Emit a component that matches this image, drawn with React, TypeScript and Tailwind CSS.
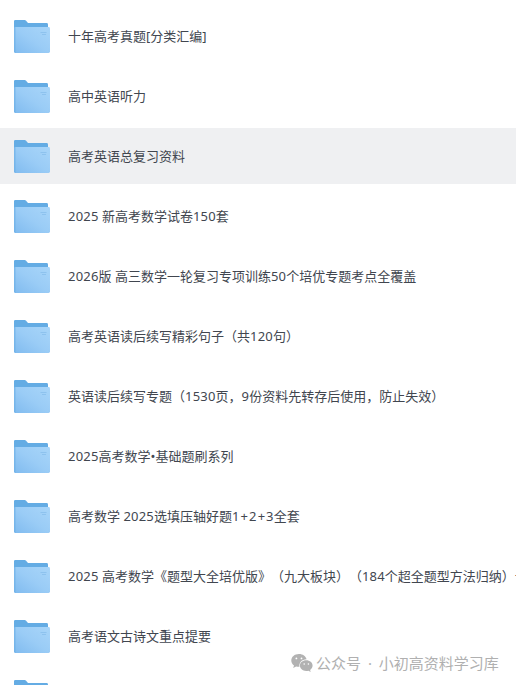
import React from 'react'

interface FolderItem {
  id: number
  name: string
  active?: boolean
}

const folders: FolderItem[] = [
  { id: 1, name: '十年高考真题[分类汇编]' },
  { id: 2, name: '高中英语听力' },
  { id: 3, name: '高考英语总复习资料', active: true },
  { id: 4, name: '2025 新高考数学试卷150套' },
  { id: 5, name: '2026版 高三数学一轮复习专项训练50个培优专题考点全覆盖' },
  { id: 6, name: '高考英语读后续写精彩句子（共120句）' },
  { id: 7, name: '英语读后续写专题（1530页，9份资料先转存后使用，防止失效）' },
  { id: 8, name: '2025高考数学•基础题刷系列' },
  { id: 9, name: '高考数学 2025选填压轴好题1+2+3全套' },
  { id: 10, name: '2025 高考数学《题型大全培优版》（九大板块）（184个超全题型方法归纳）十' },
  { id: 11, name: '高考语文古诗文重点提要' },
  { id: 12, name: '' }
]

function FolderIcon() {
  return (
    <svg width="36" height="34" viewBox="0 0 36 34" className="mt-0.5 shrink-0">
      <defs>
        <linearGradient id="folder-front" x1="0" y1="1" x2="1" y2="0">
          <stop offset="0" stopColor="#80bbef" />
          <stop offset="0.5" stopColor="#9accf6" />
          <stop offset="1" stopColor="#a8d5f9" />
        </linearGradient>
      </defs>
      <path d="M0 1.2Q0 0 1.200 0H10.500q1 0 1.600.8L14 3h18.600q1.400 0 1.400 1.400V20H0Z" fill="#64ace4" />
      <path d="M2 7h32.600q1.400 0 1.400 1.400V31.600q0 1.400-1.400 1.400H1.400Q0 33 0 31.600V9q0-2 2-2Z" fill="url(#folder-front)" />
      <path d="M0 8.500V31.600Q0 33 1.400 33H1.500V7.500Z" fill="#69aee5" opacity="0.6" />
      <path d="M26.500 12.500h6M28 14.500h4" stroke="#7fb8e8" strokeWidth="0.600" />
    </svg>
  )
}

function FolderName({ name }: { name: string }) {
  // Digits and plus signs are set a little wider than the rest
  const parts = name.split(/([0-9]+|\+)/)

  return (
    <span className="ml-[18px] whitespace-nowrap text-[13px] leading-5 text-[#41464f] [text-spacing-trim:space-all]">
      {parts.map((part, index) => {
        if (part === '+') {
          return <span key={index} className="px-px">{part}</span>
        }
        if (/^[0-9]+$/.test(part)) {
          return <span key={index} className="tracking-[0.2px]">{part}</span>
        }
        return <span key={index}>{part}</span>
      })}
    </span>
  )
}

function WechatIcon() {
  return (
    <svg width="22" height="18" viewBox="0 0 22 18" className="shrink-0">
      <path
        d="M8 0C3.500 0 .3 2.900.3 6.500c0 2 1 3.700 2.700 4.900l-.8 2.500 2.900-1.500c.9.300 1.900.400 2.900.400h.5c-.9-3.800 2.500-7.500 7.100-7.500C14.900 2.200 11.800 0 8 0Z"
        fill="#b2b2b2"
      />
      <path
        d="M15.200 6.200c-3.600 0-6.300 2.400-6.300 5.400s2.700 5.400 6.300 5.400c.8 0 1.500-.1 2.200-.3l2.300 1.200-.6-2c1.500-1 2.500-2.500 2.500-4.300 0-3-2.800-5.400-6.400-5.400Z"
        fill="#b2b2b2"
      />
      <g fill="#ffffff">
        <circle cx="5.400" cy="4.400" r="0.900" />
        <circle cx="10.500" cy="4.400" r="0.900" />
        <circle cx="13.200" cy="10" r="0.800" />
        <circle cx="17.400" cy="10" r="0.800" />
      </g>
    </svg>
  )
}

export default function App() {
  return (
    <div className="relative h-[685px] w-[516px] overflow-hidden bg-white font-['Noto_Sans','Noto_Sans_CJK_SC',sans-serif]">
      <ul className="flex flex-col gap-1 pt-2">
        {folders.map((folder) => (
          <li
            key={folder.id}
            className={`flex h-14 shrink-0 items-center pl-3.5 ${folder.active ? 'bg-[#eff0f2]' : ''}`}
          >
            <FolderIcon />
            <FolderName name={folder.name} />
          </li>
        ))}
      </ul>

      {/* Account watermark */}
      <div className="absolute left-[291px] top-[653px] flex h-5 items-center text-[#b0b0b0]">
        <WechatIcon />
        <span className="ml-[3px] whitespace-nowrap text-[15px] leading-5">
          公众号<span className="mx-[3px]"> · </span>小初高资料学习库
        </span>
      </div>
    </div>
  )
}
